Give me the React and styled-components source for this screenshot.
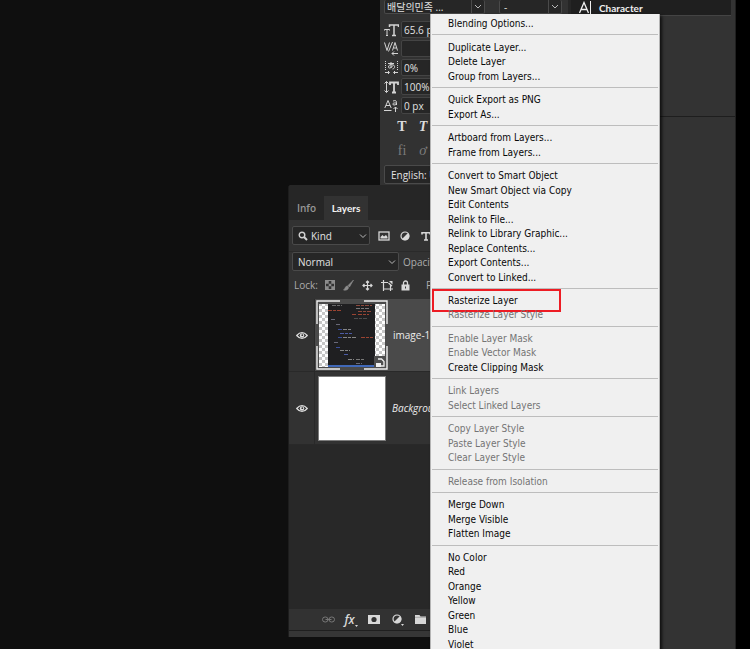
import React from "react";
import styled, { createGlobalStyle, css } from "styled-components";

const ui = `"Open Sans", "Noto Sans CJK KR", sans-serif`;

const Global = createGlobalStyle`
  * { box-sizing: border-box; }
  html, body { margin: 0; background: #0f0f0f; }
  body { font: 10px/14px ${ui}; color: #dcdcdc; overflow: hidden; }
  button, input, select { font: inherit; color: inherit; margin: 0; padding: 0; }
  svg { display: block; flex: none; }
`;

const Workspace = styled.main`
  position: relative;
  display: grid;
  grid-template-columns: minmax(0, 1fr) 92px 188px 168px 14px;
  grid-template-rows: 185px 452px 1fr;
  height: 100vh;
  overflow: hidden;
  background: linear-gradient(90deg, transparent calc(100% - 14px), #000 0) #0f0f0f;
`;

/* Character panel */
const CharacterPanel = styled.section`
  grid-area: 1 / 3;
  display: flex;
  flex-direction: column;
  padding: 0 3px 0 4px;
  background: #323232;
  overflow: hidden;
`;
const FontRow = styled.div`
  display: flex;
  gap: 14px;
  height: 14px;
  margin-bottom: 6px;
`;
const SelectBox = styled.label`
  display: flex;
  align-items: center;
  gap: ${(p) => (p.$split ? 0 : 3)}px;
  width: ${(p) => p.$w || 100}px;
  height: ${(p) => p.$h || 14}px;
  padding: 0 ${(p) => (p.$split ? 0 : 2)}px 0 ${(p) => p.$pad || 2}px;
  background: #262626;
  border: 1px solid #4a4a4a;
  border-top-width: ${(p) => (p.$split ? 0 : 1)}px;
  border-radius: 2px;
  color: #d0d0d0;

  select {
    flex: 1;
    min-width: 0;
    appearance: none;
    background: none;
    border: 0;
    outline: 0;
    color: #e2e2e2;
  }
  ${(p) => p.$split && css`
    > svg:last-child { padding: 0 2px; width: 13px; height: 100%; border-left: 1px solid #4a4a4a; }
  `}
`;
const Field = styled.label`
  display: flex;
  align-items: center;
  gap: 2px;
  height: 19px;
  color: #d4d4d4;

  input {
    width: 60px;
    height: 17px;
    padding-left: 2px;
    background: #262626;
    border: 1px solid #444;
    border-radius: 2px;
    color: #e2e2e2;
  }
`;
const StyleRow = styled.div`
  display: flex;
  gap: 5px;
  height: 24px;
  padding-left: 10px;
  align-items: center;
  color: ${(p) => (p.$dim ? "#7c7c7c" : "#dcdcdc")};
`;
const GlyphButton = styled.button`
  width: 16px;
  border: 0;
  background: none;
  font: ${(p) => (p.$italic ? "italic" : "normal")} ${(p) => (p.$bold ? 700 : 400)} 14px/18px "Liberation Serif", serif;
  text-align: center;
`;
const LanguageRow = styled.div`
  display: flex;
  margin-top: 2px;
`;

/* Right dock */
const Dock = styled.aside`
  grid-area: 1 / 4 / 4 / 5;
  display: flex;
  flex-direction: column;
  background: #333;
  border-left: 3px solid #262626;
  border-right: 1px solid #202020;
`;
const DockGroup = styled.div`
  height: 117px;
  padding-right: 4px;
  border-bottom: 1px solid #1e1e1e;
`;
const DockButton = styled.button`
  display: flex;
  align-items: center;
  gap: 7px;
  width: 100%;
  height: 16px;
  padding-left: 8px;
  border: 0;
  border-bottom: 1px solid #444;
  background: #1f1f1f;
  color: #f0f0f0;
  font-family: Lato, sans-serif;
  font-weight: 700;
  text-align: left;
`;

/* Layers panel */
const LayersPanel = styled.section`
  grid-area: 2 / 2 / 3 / 4;
  display: flex;
  flex-direction: column;
  background: #323232;
  border-left: 1px solid #1d1d1d;
  border-radius: 3px 0 0 0;
  overflow: hidden;
`;
const TabBar = styled.div`
  display: flex;
  height: 35px;
  padding-top: 11px;
  background: #262626;
`;
const Tab = styled.button`
  width: ${(p) => (p.$active ? 44 : 35)}px;
  border: 0;
  background: ${(p) => (p.$active ? "#323232" : "none")};
  color: ${(p) => (p.$active ? "#f2f2f2" : "#979797")};
  font-family: ${(p) => (p.$active ? "Lato, sans-serif" : "inherit")};
  font-weight: ${(p) => (p.$active ? 700 : 600)};
`;
const ToolRow = styled.div`
  display: flex;
  align-items: center;
  gap: ${(p) => p.$gap}px;
  height: ${(p) => p.$h}px;
  padding-left: ${(p) => p.$pad || 3}px;
  border-top: ${(p) => (p.$line ? "1px solid #2a2a2a" : "0")};
  color: #d8d8d8;
  white-space: nowrap;
`;
const Caption = styled.span`
  margin-left: ${(p) => (p.$spaced ? 8 : 0)}px;
  color: #adadad;
`;
const IconButton = styled.button`
  display: grid;
  place-items: center;
  width: 14px;
  height: 14px;
  border: 0;
  background: none;
  color: ${(p) => (p.$dim ? "#777" : "#d8d8d8")};
`;
const LayerList = styled.ul`
  flex: 1;
  margin: 0;
  padding: 0;
  list-style: none;
  background: #282828;
`;
const Layer = styled.li`
  display: flex;
  height: 73px;
  border-bottom: 1px solid #292929;
  background: #323232;
`;
const EyeCell = styled.button`
  display: grid;
  place-items: center;
  width: 26px;
  border: 0;
  border-right: 1px solid #292929;
  background: none;
  color: #dedede;
`;
const LayerBody = styled.div`
  flex: 1;
  display: flex;
  align-items: center;
  gap: 5px;
  padding-left: 1px;
  background: ${(p) => (p.$selected ? "#4a4a4a" : "none")};
  font-style: ${(p) => (p.$italic ? "italic" : "normal")};
  color: #ececec;
`;
const BlankThumb = styled.span`
  width: 68px;
  height: 65px;
  margin: 0 1px 0 2px;
  background: #fff;
  border: 1px solid #7c7c7c;
`;
const PanelFooter = styled.footer`
  display: flex;
  align-items: center;
  gap: 9px;
  height: 21px;
  padding-left: 32px;
`;
const Grip = styled.div`
  height: 7px;
  border-top: 1px solid #1f1f1f;
  background: #363636;
`;

/* Context menu */
const Menu = styled.div`
  position: absolute;
  top: 14px;
  right: 90px;
  bottom: -2px;
  width: 230px;
  display: flex;
  flex-direction: column;
  padding: 2px 1px 0;
  background: #f0f0f0;
  border: 1px solid #b4b4b4;
  border-width: 0 1px;
  box-shadow: 2px 2px 3px rgba(0, 0, 0, 0.7);
  font: 10px/14px "DejaVu Sans Condensed", "DejaVu Sans", sans-serif;
`;
const MenuItem = styled.button`
  position: relative;
  flex: 1 0 14px;
  display: flex;
  align-items: center;
  padding: 2px 0 0 16px;
  border: 0;
  background: none;
  color: ${(p) => (p.disabled ? "#747474" : "#080808")};
  line-height: 12px;
  white-space: nowrap;

  ${(p) => p.$marked && css`
    &::after {
      content: "";
      position: absolute;
      inset: -4px 97px -5px 0;
      border: 2px solid #ed1c24;
    }
  `}
`;
const Separator = styled.hr`
  flex: none;
  width: 100%;
  height: 1px;
  margin: 4px 0;
  border: 0;
  background: #bdbdbd;
`;

/* Icons */
const Svg = ({ w = 12, h = w, children }) => (
  <svg width={w} height={h} viewBox={`0 0 ${w} ${h}`} fill="none" stroke="currentColor" aria-hidden="true">
    {children}
  </svg>
);
const Chevron = () => (
  <Svg w={8} h={6}><path d="M1 1.5l3 3 3-3" stroke="#b8b8b8" /></Svg>
);
const SizeIcon = () => (
  <Svg w={15} h={14}>
    <path d="M5.5 4V2h9v2M10 2v10.500M8 12.500h4" strokeWidth="1.500" />
    <path d="M.5 7.500V6.500h5v1M3 6.500v6M2 12.500h2" />
  </Svg>
);
const KerningIcon = () => (
  <Svg w={15} h={14}>
    <path d="M.5.5l2.500 8 2.500-8M4.500 9.500L8.500 0M8.500 8.500l2.500-8 2.500 8M9.500 6h3M14 11.500H8M10 9.500l-2 2 2 2" />
  </Svg>
);
const TsumeIcon = () => (
  <Svg w={15} h={14}>
    <path d="M1.500 0v9M13.500 0v9" strokeDasharray="1 1" />
    <path d="M4 2.500h6M7 1v6M9.500 4c-3-1-5 0-5 2s3 1 4.500-1.500M9.500 4c2 1 1 4-1 4M1 11.500h4M4 10l1.500 1.500L4 13M14 11.500h-4M11 10l-1.500 1.500L11 13" />
  </Svg>
);
const ScaleIcon = () => (
  <Svg w={15} h={14}>
    <path d="M2.500 1.500v11M.5 3.500l2-2 2 2M.5 10.500l2 2 2-2" />
    <path d="M6 5V2.500h8V5M10 2.500v10M8 12.500h4" strokeWidth="1.800" />
  </Svg>
);
const BaselineIcon = () => (
  <Svg w={15} h={14}>
    <path d="M.8 9L4 1.500 7.200 9M2 6.500h4M0 11.500h7.500M9 2c3-1 3.500 0 3.500 1.500V6M12.500 4c-5-.5-4 2-2.500 2s2.500-1 2.500-1M11.500 13V8M9.500 10l2-2 2 2" />
  </Svg>
);
const CursorAIcon = () => (
  <Svg w={13} h={14}>
    <path d="M.5 12L5 1.500 9.500 12M2.200 8.500h5.600" strokeWidth="1.300" />
    <path d="M11.500 0v14" />
  </Svg>
);
const SearchIcon = () => (
  <Svg w={10}><circle cx="4" cy="4" r="2.800" strokeWidth="1.400" /><path d="M6 6l3 3" strokeWidth="2" /></Svg>
);
const ImageIcon = () => (
  <Svg w={12} h={10}>
    <rect x="1" y="1" width="10" height="8" strokeWidth="1.300" />
    <path d="M2.500 7.500V6l2-2 1.500 1.500L8 4l1.500 2v1.500z" fill="currentColor" stroke="none" />
  </Svg>
);
const HalfIcon = () => (
  <Svg w={10}><circle cx="5" cy="5" r="4" strokeWidth="1.200" /><path d="M8 2A4.200 4.200 0 0 1 2 8z" fill="currentColor" stroke="none" /></Svg>
);
const TypeIcon = () => (
  <Svg w={10}><path d="M1 3.500V1.800h8v1.700M5 1.500V9M3 9h4" strokeWidth="1.600" /></Svg>
);
const CheckerIcon = () => (
  <Svg w={10}>
    <rect x=".5" y=".5" width="9" height="9" stroke="#8c8c8c" />
    <path d="M1 1h2.700v2.700H1zM6.300 1H9v2.700H6.300zM3.700 3.700h2.600v2.600H3.700zM1 6.300h2.700V9H1zM6.300 6.300H9V9H6.300z" fill="#8c8c8c" stroke="none" />
  </Svg>
);
const BrushIcon = () => (
  <Svg w={11} h={12}>
    <path d="M10.500 1L5 6.500l1.500 1.500zM4.500 7C2 7 2.500 9.500.5 11c2.500.5 5 0 5-2.800z" fill="#8c8c8c" stroke="#8c8c8c" strokeWidth=".6" />
  </Svg>
);
const MoveIcon = () => (
  <Svg w={11}>
    <path d="M5.500 1v9M1 5.500h9M4 2.500L5.500 1 7 2.500M4 8.500L5.500 10 7 8.500M2.500 4L1 5.500 2.500 7M8.500 4L10 5.500 8.500 7" strokeWidth="1.200" />
  </Svg>
);
const ArtboardIcon = () => (
  <Svg w={12} h={11}>
    <path d="M2.500 0v11M0 2.500h7M2.500 9H12M9.500 5v6M7.500 3l3.500 3" strokeWidth="1.200" />
    <path d="M8 1h3.500v3.500z" fill="currentColor" stroke="none" />
  </Svg>
);
const LockIcon = () => (
  <Svg w={9} h={11}>
    <path d="M2.500 5V3a2 2 0 0 1 4 0v2" strokeWidth="1.300" />
    <path d="M.5 4.500h8v6h-8z" fill="currentColor" stroke="none" />
    <path d="M4.500 6.500v2" stroke="#323232" />
  </Svg>
);
const EyeIcon = () => (
  <Svg w={12} h={9}>
    <path d="M.7 4.500Q6-1.500 11.300 4.500 6 10.500.7 4.500z" strokeWidth="1.200" />
    <circle cx="6" cy="4.500" r="2.200" fill="currentColor" stroke="none" />
    <circle cx="6.300" cy="4.200" r=".9" fill="#323232" stroke="none" />
  </Svg>
);
const LinkIcon = () => (
  <Svg w={13} h={7}><rect x=".5" y="1" width="5.500" height="5" rx="2.500" /><rect x="7" y="1" width="5.500" height="5" rx="2.500" /><path d="M3.500 3.500h6" /></Svg>
);
const MaskIcon = () => (
  <Svg w={12} h={9}><rect width="12" height="9" fill="currentColor" stroke="none" /><circle cx="6" cy="4.500" r="2.600" fill="#323232" stroke="none" /></Svg>
);
const FolderIcon = () => (
  <Svg w={11} h={9}><path d="M0 0h4.500l1 1.500H11V9H0z" fill="currentColor" stroke="none" /><path d="M0 2.300h11" stroke="#888" strokeWidth=".6" /></Svg>
);
const AdjustIcon = () => (
  <Svg w={13}>
    <circle cx="6" cy="6" r="4" strokeWidth="1.200" />
    <path d="M9 3A4.200 4.200 0 0 1 3 9z" fill="currentColor" stroke="none" />
    <path d="M10 11h3l-1.500 2z" fill="currentColor" stroke="none" />
  </Svg>
);
const Fx = styled.span`
  display: flex;
  align-items: flex-end;
  font: italic 600 12px/14px "Open Sans", sans-serif;
`;
const MoreMark = () => (
  <Svg w={3} h={2}><path d="M0 0h3L1.500 2z" fill="currentColor" stroke="none" /></Svg>
);

const codeLines = [
  [10, 4, 10, "#777"], [34, 4, 16, "#a05040"], [34, 7, 14, "#888"], [6, 9, 13, "#b04a35"], [36, 10, 13, "#a05040"],
  [30, 13, 5, "#b04a35"], [36, 13, 11, "#b04a35"], [9, 18, 4, "#778"], [32, 17, 14, "#555"], [14, 23, 4, "#778"],
  [16, 28, 4, "#4058b0"], [21, 28, 9, "#999"], [18, 32, 12, "#5566bb"], [16, 36, 4, "#4058b0"], [21, 36, 14, "#999"],
  [39, 36, 12, "#b04a35"], [12, 41, 5, "#778"], [14, 46, 4, "#4058b0"], [18, 49, 10, "#999"], [22, 53, 5, "#5566bb"],
  [26, 58, 6, "#999"], [34, 58, 8, "#888"], [34, 62, 6, "#778"],
];
const CodeThumb = () => (
  <svg width="72" height="70" viewBox="0 0 72 70" role="img" aria-label="Layer thumbnail">
    <defs>
      <pattern id="checks" width="6" height="6" patternUnits="userSpaceOnUse">
        <rect width="6" height="6" fill="#fff" />
        <path d="M0 0h3v3H0zM3 3h3v3H3z" fill="#c6c6c6" />
      </pattern>
    </defs>
    <rect x="1" y="1" width="70" height="68" fill="#4a4a4a" />
    <rect x="3" y="4" width="66" height="63" fill="url(#checks)" />
    <rect x="12" y="4" width="47" height="63" fill="#1f1f21" />
    <rect x="12" y="65" width="47" height="2" fill="#4068b8" />
    <g transform="translate(6 1)" opacity="0.85">
      {codeLines.map(([x, y, w, c], i) => (
        <path key={i} d={`M${x} ${y + 0.5}h${w}`} stroke={c} strokeDasharray="4 1 3 1" fill="none" />
      ))}
    </g>
    <path d="M1 24V1h23M48 1h23v23M71 46v23H48M24 69H1V46" fill="none" stroke="#f0f0f0" strokeWidth="1.400" />
    <rect x="58" y="56" width="12" height="12" fill="#4d4d4d" />
    <path d="M62 59h3.500l2.500 2.500V66h-3" fill="none" stroke="#eee" strokeWidth="1.300" />
    <path d="M60 63h5v4h-5z" fill="#eee" />
  </svg>
);

const groups = [
  ["Blending Options..."],
  ["Duplicate Layer...", "Delete Layer", "Group from Layers..."],
  ["Quick Export as PNG", "Export As..."],
  ["Artboard from Layers...", "Frame from Layers..."],
  ["Convert to Smart Object", "New Smart Object via Copy", "Edit Contents", "Relink to File...",
    "Relink to Library Graphic...", "Replace Contents...", "Export Contents...", "Convert to Linked..."],
  ["Rasterize Layer", "-Rasterize Layer Style"],
  ["-Enable Layer Mask", "-Enable Vector Mask", "Create Clipping Mask"],
  ["-Link Layers", "-Select Linked Layers"],
  ["-Copy Layer Style", "-Paste Layer Style", "-Clear Layer Style"],
  ["-Release from Isolation"],
  ["Merge Down", "Merge Visible", "Flatten Image"],
  ["No Color", "Red", "Orange", "Yellow", "Green", "Blue", "Violet"],
];

const fields = [
  ["Font size", SizeIcon, "65.6 pt"],
  ["Kerning", KerningIcon, ""],
  ["Tsume", TsumeIcon, "0%"],
  ["Vertical scale", ScaleIcon, "100%"],
  ["Baseline shift", BaselineIcon, "0 px"],
];

function ContextMenu() {
  return (
    <Menu role="menu">
      {groups.map((items, g) => (
        <React.Fragment key={g}>
          {g > 0 && <Separator />}
          {items.map((item) => {
            const off = item.startsWith("-");
            return (
              <MenuItem key={item} role="menuitem" disabled={off} $marked={item === "Rasterize Layer"}>
                {off ? item.slice(1) : item}
              </MenuItem>
            );
          })}
        </React.Fragment>
      ))}
    </Menu>
  );
}

export default function App() {
  return (
    <>
      <Global />
      <Workspace>
        <CharacterPanel aria-label="Character">
          <FontRow>
            <SelectBox $split $w={101}>
              <select aria-label="Font family"><option>배달의민족 ...</option></select>
              <Chevron />
            </SelectBox>
            <SelectBox $split $w={63} $pad={4}>
              <select aria-label="Font style"><option>-</option></select>
              <Chevron />
            </SelectBox>
          </FontRow>
          {fields.map(([name, Icon, value]) => (
            <Field key={name}>
              <Icon />
              <input aria-label={name} defaultValue={value} />
            </Field>
          ))}
          <StyleRow>
            <GlyphButton $bold aria-label="Faux bold">T</GlyphButton>
            <GlyphButton $bold $italic aria-label="Faux italic">T</GlyphButton>
          </StyleRow>
          <StyleRow $dim>
            <GlyphButton aria-label="Ligatures">fi</GlyphButton>
            <GlyphButton $italic aria-label="Contextual alternates">ơ</GlyphButton>
          </StyleRow>
          <LanguageRow>
            <SelectBox $w={100} $h={19} $pad={6}>
              <select aria-label="Language"><option>English: USA</option></select>
              <Chevron />
            </SelectBox>
          </LanguageRow>
        </CharacterPanel>

        <Dock>
          <DockGroup>
            <DockButton><CursorAIcon />Character</DockButton>
          </DockGroup>
        </Dock>

        <LayersPanel aria-label="Layers">
          <TabBar>
            <Tab>Info</Tab>
            <Tab $active>Layers</Tab>
          </TabBar>
          <ToolRow $h={31} $gap={7}>
            <SelectBox $w={78} $h={19} $pad={5}>
              <SearchIcon />
              <select aria-label="Filter type"><option>Kind</option></select>
              <Chevron />
            </SelectBox>
            <IconButton aria-label="Pixel layers"><ImageIcon /></IconButton>
            <IconButton aria-label="Adjustment layers"><HalfIcon /></IconButton>
            <IconButton aria-label="Type layers"><TypeIcon /></IconButton>
          </ToolRow>
          <ToolRow $h={20} $gap={4} $line>
            <SelectBox $w={107} $h={19} $pad={5}>
              <select aria-label="Blend mode"><option>Normal</option></select>
              <Chevron />
            </SelectBox>
            <Caption>Opacity:</Caption>
          </ToolRow>
          <ToolRow $h={28} $gap={5} $pad={5}>
            <Caption>Lock:</Caption>
            <IconButton aria-label="Lock transparent pixels"><CheckerIcon /></IconButton>
            <IconButton aria-label="Lock image pixels"><BrushIcon /></IconButton>
            <IconButton aria-label="Lock position"><MoveIcon /></IconButton>
            <IconButton aria-label="Prevent auto-nesting"><ArtboardIcon /></IconButton>
            <IconButton aria-label="Lock all"><LockIcon /></IconButton>
            <Caption $spaced>Fill:</Caption>
          </ToolRow>
          <LayerList>
            <Layer>
              <EyeCell aria-label="Toggle image layer"><EyeIcon /></EyeCell>
              <LayerBody $selected><CodeThumb />image-12</LayerBody>
            </Layer>
            <Layer>
              <EyeCell aria-label="Toggle background"><EyeIcon /></EyeCell>
              <LayerBody $italic><BlankThumb />Background</LayerBody>
            </Layer>
          </LayerList>
          <PanelFooter>
            <IconButton $dim aria-label="Link layers"><LinkIcon /></IconButton>
            <IconButton aria-label="Layer style"><Fx>fx<MoreMark /></Fx></IconButton>
            <IconButton aria-label="Add mask"><MaskIcon /></IconButton>
            <IconButton aria-label="Adjustment layer"><AdjustIcon /></IconButton>
            <IconButton aria-label="New group"><FolderIcon /></IconButton>
          </PanelFooter>
          <Grip />
        </LayersPanel>

        <ContextMenu />
      </Workspace>
    </>
  );
}
